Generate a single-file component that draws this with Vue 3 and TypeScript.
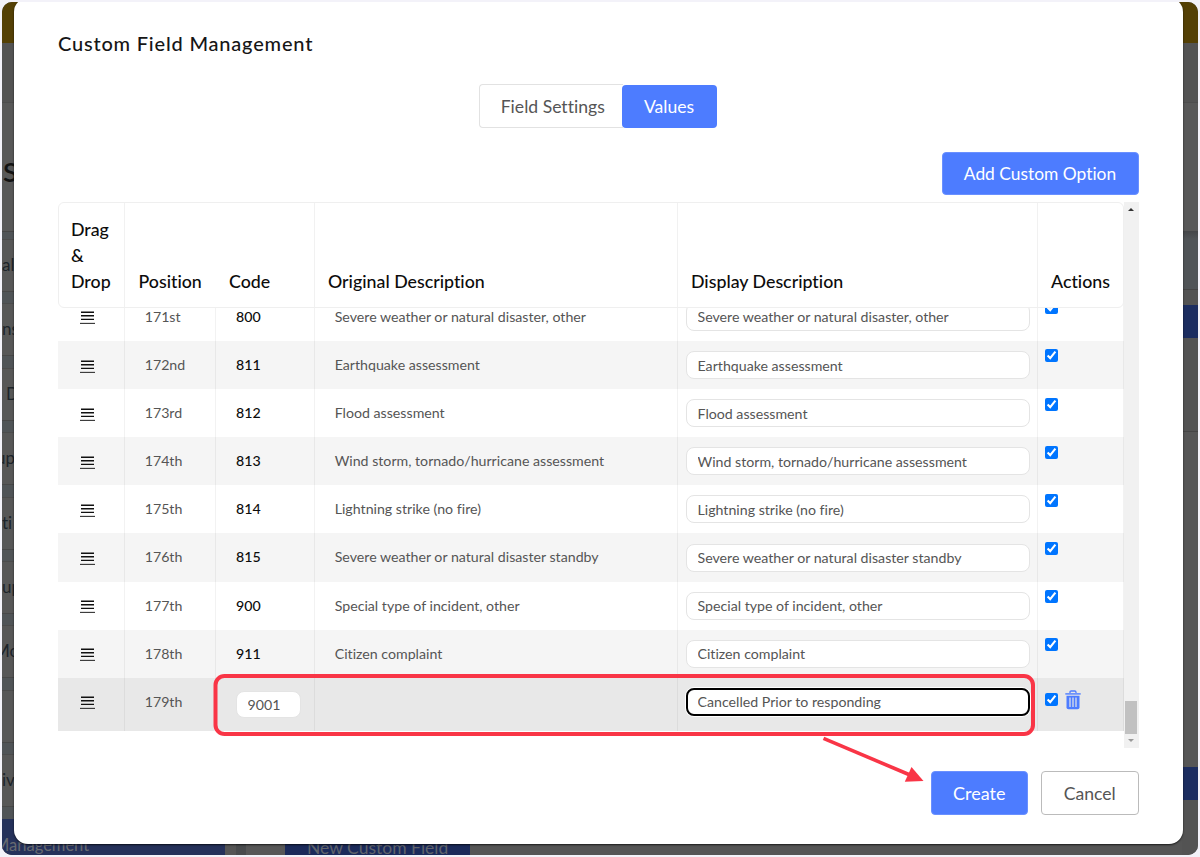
<script setup lang="ts">
import { ref } from 'vue'

interface Row {
  position: string
  code: string
  original: string
  display: string
  enabled: boolean
  custom?: boolean
}

const make = (position: string, code: string, original: string): Row => ({
  position,
  code,
  original,
  display: original,
  enabled: true,
})

const rows = ref<Row[]>([
  make('171st', '800', 'Severe weather or natural disaster, other'),
  make('172nd', '811', 'Earthquake assessment'),
  make('173rd', '812', 'Flood assessment'),
  make('174th', '813', 'Wind storm, tornado/hurricane assessment'),
  make('175th', '814', 'Lightning strike (no fire)'),
  make('176th', '815', 'Severe weather or natural disaster standby'),
  make('177th', '900', 'Special type of incident, other'),
  make('178th', '911', 'Citizen complaint'),
  { position: '179th', code: '9001', original: '', display: 'Cancelled Prior to responding', enabled: true, custom: true },
])

const sideItems = ['al', 'ns', 'D', 'up', 'ti', 'up', 'Mo', '', 'iv']
</script>

<template>
  <div class="screen">
    <div class="page">
      <div class="topbar"></div>
      <div class="subbar"></div>
      <div class="titlebar"><span>S</span></div>
      <div class="content">
        <div class="side">
          <div v-for="(s, i) in sideItems" :key="i" class="side-card" :class="'c' + i">{{ s }}</div>
          <div class="side-active">Management</div>
        </div>
        <div class="gutter"></div>
        <div class="main">
          <div class="new-field">New Custom Field</div>
        </div>
        <div class="right">
          <div class="r-head"></div>
          <div class="r-blue first"></div>
          <div class="r-mid"></div>
          <div class="r-low"></div>
          <div class="r-blue"></div>
        </div>
      </div>

      <div class="modal">
        <h1>Custom Field Management</h1>
        <div class="tabs">
          <button class="tab">Field Settings</button>
          <button class="tab active">Values</button>
        </div>
        <div class="add-row">
          <button class="btn primary add">Add Custom Option</button>
        </div>

        <div class="table-wrap">
          <div class="table">
            <div class="thead">
              <div class="th lined">Drag<br />&amp;<br />Drop</div>
              <div class="th">Position</div>
              <div class="th lined">Code</div>
              <div class="th lined">Original Description</div>
              <div class="th lined">Display Description</div>
              <div class="th">Actions</div>
            </div>
            <div class="tbody">
              <div v-for="row in rows" :key="row.position" class="tr" :class="{ custom: row.custom }">
                <div class="td drag">
                  <svg width="15" height="14" viewBox="0 0 15 14">
                    <path d="M1 1.2H14M1 4.8H14M1 8.4H14" stroke="#111" stroke-width="1.4" />
                    <path d="M0 12.4H15" stroke="#333" stroke-width="1.1" />
                  </svg>
                </div>
                <div class="td pos">{{ row.position }}</div>
                <div class="td code">
                  <input v-if="row.custom" v-model="row.code" class="field code-field" />
                  <template v-else>{{ row.code }}</template>
                </div>
                <div class="td orig">{{ row.original }}</div>
                <div class="td disp"><input v-model="row.display" class="field" :class="{ focused: row.custom }" /></div>
                <div class="td act">
                  <input v-model="row.enabled" type="checkbox" />
                  <svg v-if="row.custom" class="trash" width="16" height="20" viewBox="0 0 16 20">
                    <path d="M5 3V2.2Q5 1 6.200 1H9.800Q11 1 11 2.200V3" fill="none" stroke="#4d7cff" stroke-width="1.300" />
                    <path d="M.3 3.200H15.700V4.600H.3Z" fill="#4d7cff" />
                    <path d="M1.500 5.700H14.500V17.500Q14.500 19.300 12.500 19.300H3.500Q1.500 19.300 1.500 17.500Z" fill="#4d7cff" />
                    <path d="M5 7.500V17M8 7.500V17M11 7.500V17" stroke="#e8e8e8" stroke-width="1.200" />
                  </svg>
                </div>
              </div>
            </div>
          </div>
          <div class="scrollbar">
            <i class="up"></i>
            <div class="thumb"></div>
            <i class="down"></i>
          </div>
        </div>

        <div class="footer">
          <button class="btn primary">Create</button>
          <button class="btn outline">Cancel</button>
        </div>
      </div>
    </div>

    <svg class="callout" width="1200" height="857" viewBox="0 0 1200 857">
      <rect x="215.500" y="676" width="817.500" height="58" rx="9" fill="none" stroke="#f93546" stroke-width="4" />
      <path d="M823.500 738.300L910 775" stroke="#f93546" stroke-width="3.600" fill="none" />
      <path d="M911.500 767L923.500 781L904.800 781.800Z" fill="#f93546" />
    </svg>
  </div>
</template>

<style>
body {
  margin: 0;
  background: #f3f2f9;
}
</style>

<style scoped>
* {
  box-sizing: border-box;
}
.screen {
  position: relative;
  width: 1200px;
  height: 857px;
  padding: 2px;
  background: #f3f2f9;
  overflow: hidden;
  font-family: 'Lato', 'Liberation Sans', sans-serif;
  font-variant-ligatures: none;
}
.page {
  position: relative;
  height: 853px;
  border-radius: 10px;
  overflow: hidden;
  background: #575757;
  display: flex;
  flex-direction: column;
}
.topbar {
  height: 41px;
  background: #544005;
}
.subbar {
  height: 60px;
  background: #535353;
  border-bottom: 1px solid #4d4d4d;
}
.titlebar {
  height: 128px;
  background: #585858;
  color: #131313;
  font-size: 27px;
  font-weight: 600;
  line-height: 34px;
  padding: 52px 0 0 1px;
}
.content {
  flex: 1;
  display: flex;
  min-height: 0;
}
.side {
  width: 223px;
  padding-top: 7px;
  background: #505457;
  border-top: 1px solid #464646;
  display: flex;
  flex-direction: column;
  gap: 11.4px;
}
.side-card {
  height: 53px;
  flex: none;
  background: #575757;
  border-top: 1px solid #4c4c4c;
  border-bottom: 1px solid #484848;
  color: #1d242a;
  font-size: 17px;
  line-height: 49px;
  white-space: nowrap;
}
.c2 {
  padding-left: 4px;
}
.c3 {
  text-indent: -6px;
}
.c6 {
  text-indent: -8px;
}
.side-active {
  flex: none;
  height: 60px;
  background: #25315a;
  color: #676a70;
  font-size: 16.500px;
  line-height: 53px;
  text-indent: -8px;
  white-space: nowrap;
}
.gutter {
  width: 60px;
  background: linear-gradient(90deg, #555 0 11px, #494b4d 11px 21px, #575757 21px);
}
.main {
  flex: 1;
  display: flex;
  flex-direction: column;
  justify-content: flex-end;
  align-items: flex-start;
  background: #555;
}
.new-field {
  width: 185px;
  height: 26px;
  background: #1b2a5a;
  color: #5f636b;
  font-size: 17.500px;
  line-height: 23px;
  padding: 7px 0 0 22px;
  white-space: nowrap;
}
.right {
  width: 16px;
  background: #535353;
}
.r-head {
  height: 59px;
  margin-bottom: 15px;
  background: linear-gradient(#444648, #505457 8px);
  border-bottom: 1px solid #454545;
}
.r-blue {
  height: 33px;
  background: #1c2d60;
}
.r-mid {
  height: 94px;
  border-bottom: 1px solid #454545;
}
.r-low {
  height: 335px;
  background: #565656;
}
.modal {
  position: absolute;
  left: 12px;
  top: -4px;
  width: 1168.500px;
  height: 845.500px;
  padding: 0 44px;
  border-radius: 14px;
  background: #fff;
  box-shadow: 0 1px 2px rgba(0, 0, 0, 0.7);
  display: flex;
  flex-direction: column;
}
h1 {
  margin: 32px 0 0;
  height: 26px;
  font-family: 'Lato', sans-serif;
  font-size: 20px;
  line-height: 26px;
  font-weight: 500;
  letter-spacing: 0.8px;
  color: #161616;
}
button {
  font-family: inherit;
  font-variant-ligatures: none;
}
.tabs {
  display: flex;
  margin: 28px 0 0 421px;
}
.tab {
  width: 143.500px;
  height: 44px;
  padding: 1px 0 0 3px;
  border: 1px solid #e2e2e2;
  border-right: 0;
  border-radius: 4px 0 0 4px;
  background: #fff;
  color: #555;
  font-size: 17.600px;
}
.tab.active {
  width: 95px;
  margin-left: -1px;
  padding: 0;
  border: 0;
  height: 43px;
  margin-top: 0.500px;
  border-radius: 4px;
  background: #4d7cff;
  color: #fff;
}
.add-row {
  display: flex;
  justify-content: flex-end;
  margin-top: 23.500px;
}
.btn {
  height: 43.500px;
  width: 97.500px;
  border-radius: 4px;
  font-size: 17.600px;
  padding: 1px 0 0;
}
.primary {
  border: 1px solid #6a90ff;
  background: #4d7cff;
  color: #fff;
  font-size: 18px;
}
.add {
  width: 197px;
  font-size: 17.400px;
}
.outline {
  border: 1px solid #bbb;
  background: #fff;
  color: #555;
}
.table-wrap {
  display: flex;
  height: 546px;
  margin-top: 6.500px;
}
.table {
  width: 1066px;
  height: 546px;
  overflow: hidden;
}
.thead {
  position: relative;
  z-index: 1;
  height: 106px;
  border: 1px solid #efefef;
  border-radius: 6px;
  background: #fff;
}
.thead,
.tr {
  display: grid;
  grid-template-columns: 67px 91px 99px 363px 360px 86px;
}
.thead {
  grid-template-columns: 66px 91px 99px 363px 360px 85px;
}
.th {
  display: flex;
  align-items: flex-end;
  padding: 0 0 12px 13px;
  color: #0c0c0c;
  font-size: 17.800px;
  line-height: 26.200px;
  font-weight: 500;
  white-space: nowrap;
}
.th:first-child {
  padding-left: 12px;
}
.th:nth-child(2) {
  padding-left: 13.500px;
}
.lined {
  border-right: 1px solid #f1f1f1;
}
.tbody {
  margin-top: -14.700px;
}
.tr {
  height: 48.140px;
  background: #fff;
  color: #555;
  font-size: 14.180px;
}
.tr:nth-child(even) {
  background: #f5f5f5;
}
.tr.custom {
  height: 53px;
  background: #e8e8e8;
}
.td {
  display: flex;
  align-items: center;
  border-right: 1px solid rgba(0, 0, 0, 0.05);
  white-space: nowrap;
}
.pos,
.code,
.orig {
  padding: 0 0 1.200px 20px;
}
.custom .td {
  padding-bottom: 5px;
}
.drag {
  padding: 3px 0 0 22px;
}
.pos,
.orig {
  padding-left: 19.700px;
}
.code {
  color: #0c0c0c;
  font-weight: 500;
}
.disp {
  padding-left: 8px;
}
.field {
  width: 343.500px;
  height: 28px;
  padding: 0 0 0 10.500px;
  border: 1px solid #e4e4e4;
  border-radius: 8px;
  background: #fff;
  color: #555;
  font-family: inherit;
  font-size: 14.180px;
  font-variant-ligatures: none;
  outline: none;
}
.focused {
  border: 2px solid #000;
  box-shadow: 0 0 0 1px #fff;
  padding-left: 9.500px;
}
.code-field {
  width: 65px;
  height: 27px;
  margin-top: 6px;
}
.act {
  align-items: flex-start;
  padding: 8.500px 0 0 6.500px;
}
.custom .act {
  padding-top: 12px;
}
.act input {
  width: 13px;
  height: 13px;
  margin: 0;
}
.custom .act input {
  margin-top: 3px;
}
.trash {
  margin-left: 7.800px;
}
.scrollbar {
  width: 15px;
  height: 546px;
  background: #f1f1f1;
  display: flex;
  flex-direction: column;
  align-items: center;
}
.up {
  margin-top: 6px;
  border: 3px solid transparent;
  border-top: 0;
  border-bottom: 3px solid #333;
}
.thumb {
  width: 12px;
  height: 33px;
  margin-top: 490px;
  background: #c1c1c1;
}
.down {
  margin-top: 5px;
  border: 3px solid transparent;
  border-bottom: 0;
  border-top: 3px solid #999;
}
.footer {
  display: flex;
  justify-content: flex-end;
  gap: 13px;
  margin-top: 23.500px;
}
.callout {
  position: absolute;
  left: 0;
  top: 0;
  pointer-events: none;
}
</style>
